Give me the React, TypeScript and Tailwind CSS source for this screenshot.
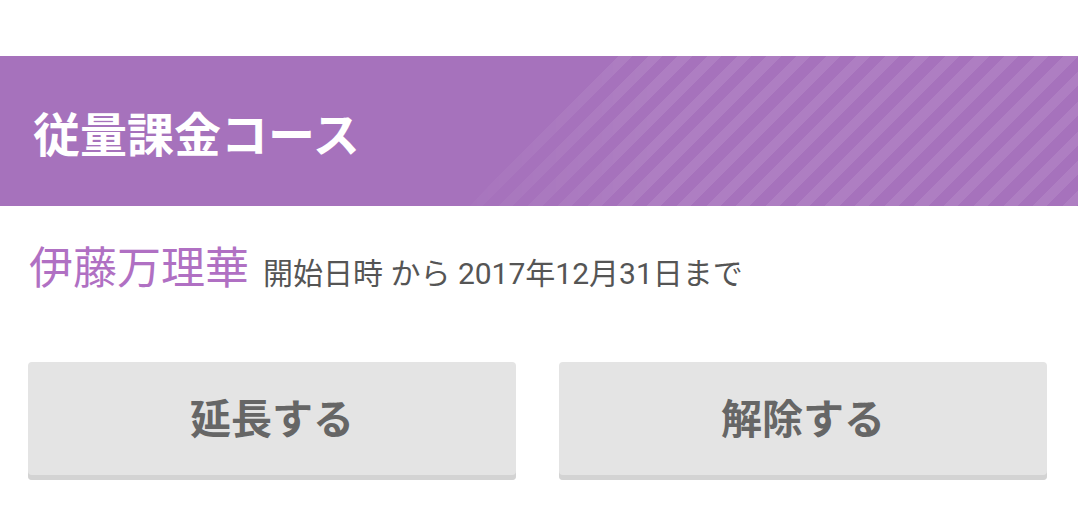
import React from 'react'

const Button = ({ label }: { label: string }) => (
  <button className="flex-1 h-[118px] pb-[2px] rounded-[4px] bg-[#e4e4e4] shadow-[inset_0_-5px_0_#d3d3d3] flex items-center justify-center text-[41px] leading-none font-bold text-[#666666]">
    {label}
  </button>
)

const App = () => {
  return (
    <div className="w-[1078px] h-[527px] bg-white pt-[56px] font-['Roboto','Noto_Sans_CJK_JP',sans-serif] overflow-hidden">
      {/* Banner */}
      <div className="relative h-[150px] bg-[#a672bc] flex items-center pl-[33px] overflow-hidden">
        <div className="absolute inset-y-0 left-[470px] right-0 [clip-path:polygon(140px_0,100%_0,100%_100%,0_100%)] bg-[repeating-linear-gradient(135deg,rgba(255,255,255,0.09)_0_10px,transparent_10px_21px)] [mask-image:linear-gradient(90deg,rgba(0,0,0,0.3),black_30%)]"></div>
        <h1 className="relative text-[47px] leading-none font-bold text-white font-['Noto_Sans_CJK_JP',sans-serif]">
          従量課金コース
        </h1>
      </div>

      {/* Period */}
      <div className="flex items-baseline pl-[29px] mt-[41px]">
        <span className="text-[44px] leading-none text-[#b070c3]">伊藤万理華</span>
        <span className="ml-[14px] text-[30px] leading-none text-[#555555]">
          開始日時 から 2017年12月31日まで
        </span>
      </div>

      {/* Actions */}
      <div className="flex gap-[43px] pl-[28px] pr-[31px] mt-[71px]">
        <Button label="延長する" />
        <Button label="解除する" />
      </div>
    </div>
  )
}

export default App
